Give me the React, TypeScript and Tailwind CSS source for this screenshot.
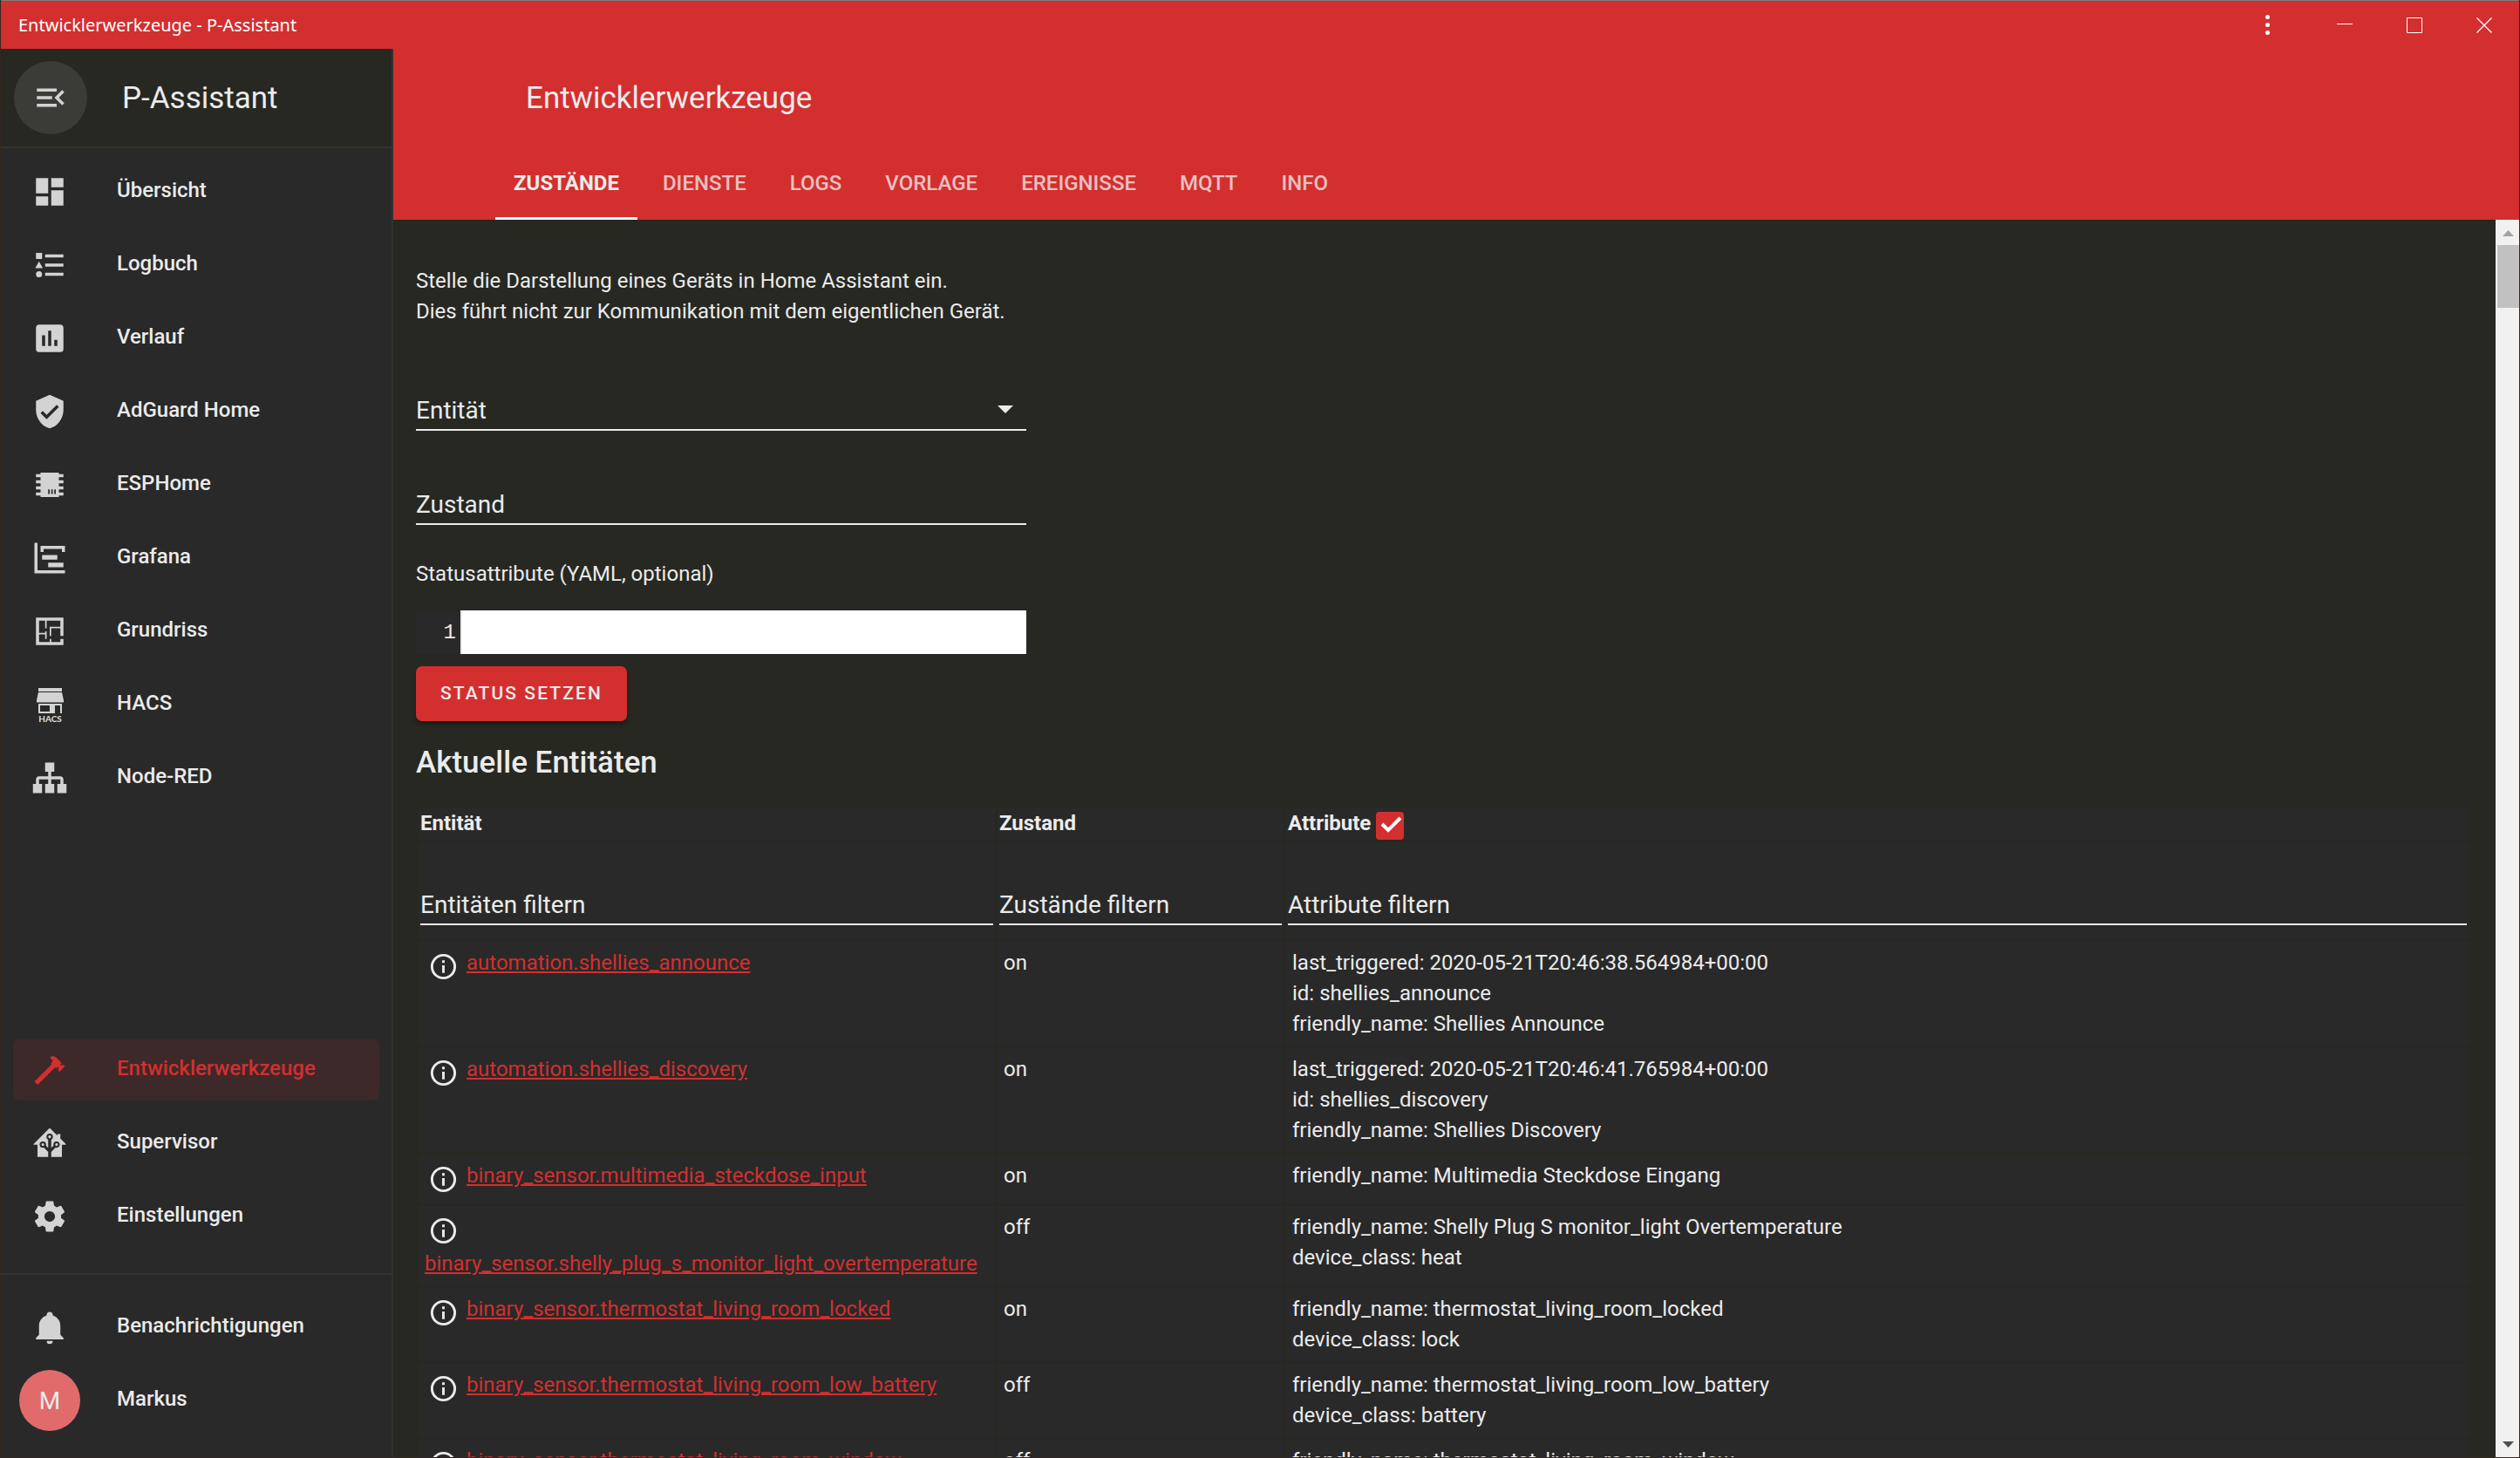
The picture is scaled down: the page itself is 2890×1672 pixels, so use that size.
import React from "react";

const icons = {
  menuOpen:
    "M21,15.61L19.59,17L14.58,12L19.59,7L21,8.39L17.44,12L21,15.61M3,6H16V8H3V6M3,13V11H13V13H3M3,18V16H16V18H3Z",
  dashboard: "M13,3V9H21V3M13,21H21V11H13M3,21H11V15H3M3,13H11V3H3V13Z",
  logbook:
    "M5,9.5L7.5,14H2.5L5,9.5M3,4H7V8H3V4M5,20A2,2 0 0,0 7,18A2,2 0 0,0 5,16A2,2 0 0,0 3,18A2,2 0 0,0 5,20M9,5V7H21V5H9M9,19H21V17H9V19M9,13H21V11H9V13Z",
  history:
    "M17,17H15V13H17M13,17H11V7H13M9,17H7V10H9M19,3H5C3.89,3 3,3.89 3,5V19A2,2 0 0,0 5,21H19A2,2 0 0,0 21,19V5C21,3.89 20.1,3 19,3Z",
  shield:
    "M10,17L6,13L7.41,11.59L10,14.17L16.59,7.58L18,9M12,1L3,5V11C3,16.55 6.84,21.74 12,23C17.16,21.74 21,16.55 21,11V5L12,1Z",
  chip: "M6,4H18V5H21V7H18V9H21V11H18V13H21V15H18V17H21V19H18V20H6V19H3V17H6V15H3V13H6V11H3V9H6V7H3V5H6V4M11,15V18H12V15H11M13,15V18H14V15H13M15,15V18H16V15H15Z",
  timeline:
    "M2,2H4V20H22V22H2V2M7,10H17V13H7V10M11,15H21V18H11V15M6,4H22V8H20V6H8V8H6V4Z",
  floorPlan:
    "M10,5V10H9V5H5V13H9V12H10V17H9V14H5V19H12V17H13V19H19V17H21V21H3V3H21V15H19V10H13V15H12V9H19V5H10Z",
  sitemap:
    "M9,2V8H11V11H5C3.89,11 3,11.89 3,13V16H1V22H7V16H5V13H11V16H9V22H15V16H13V13H19V16H17V22H23V16H21V13C21,11.89 20.11,11 19,11H13V8H15V2H9Z",
  hammer:
    "M2,19.63L13.43,8.2L12.72,7.5L14.14,6.07L12,3.89C13.2,2.7 15.09,2.7 16.27,3.89L19.87,7.5L18.45,8.91H21.29L22,9.62L18.45,13.21L17.74,12.5V9.62L16.27,11.04L15.56,10.33L4.13,21.76L2,19.63Z",
  homeAssistant:
    "M21.8,13H20V21H13V17.67L15.79,14.88L16.5,15C17.66,15 18.6,14.06 18.6,12.9C18.6,11.74 17.66,10.8 16.5,10.8A2.1,2.1 0 0,0 14.4,12.9L14.5,13.61L13,15.13V9.65C13.66,9.29 14.1,8.6 14.1,7.8A2.1,2.1 0 0,0 12,5.7A2.1,2.1 0 0,0 9.9,7.8C9.9,8.6 10.34,9.29 11,9.65V15.13L9.5,13.61L9.6,12.9A2.1,2.1 0 0,0 7.5,10.8A2.1,2.1 0 0,0 5.4,12.9A2.1,2.1 0 0,0 7.5,15L8.21,14.88L11,17.67V21H4V13H2.25C1.83,13 1.42,13 1.42,12.79C1.43,12.57 1.85,12.15 2.28,11.72L11,3C11.33,2.67 11.67,2.33 12,2.33C12.33,2.33 12.67,2.67 13,3L17,7V6H19V9L21.78,11.78C22.18,12.18 22.59,12.59 22.6,12.8C22.6,13 22.2,13 21.8,13M7.5,12A0.9,0.9 0 0,1 8.4,12.9A0.9,0.9 0 0,1 7.5,13.8A0.9,0.9 0 0,1 6.6,12.9A0.9,0.9 0 0,1 7.5,12M16.5,12C17,12 17.4,12.4 17.4,12.9C17.4,13.4 17,13.8 16.5,13.8A0.9,0.9 0 0,1 15.6,12.9A0.9,0.9 0 0,1 16.5,12M12,6.9C12.5,6.9 12.9,7.3 12.9,7.8C12.9,8.3 12.5,8.7 12,8.7C11.5,8.7 11.1,8.3 11.1,7.8C11.1,7.3 11.5,6.9 12,6.9Z",
  settings:
    "M12,15.5A3.5,3.5 0 0,1 8.5,12A3.5,3.5 0 0,1 12,8.5A3.5,3.5 0 0,1 15.5,12A3.5,3.5 0 0,1 12,15.5M19.43,12.97C19.47,12.65 19.5,12.33 19.5,12C19.5,11.67 19.47,11.34 19.43,11L21.54,9.37C21.73,9.22 21.78,8.95 21.66,8.73L19.66,5.27C19.54,5.05 19.27,4.96 19.05,5.05L16.56,6.05C16.04,5.66 15.5,5.32 14.87,5.07L14.5,2.42C14.46,2.18 14.25,2 14,2H10C9.75,2 9.54,2.18 9.5,2.42L9.13,5.07C8.5,5.32 7.96,5.66 7.44,6.05L4.95,5.05C4.73,4.96 4.46,5.05 4.34,5.27L2.34,8.73C2.21,8.95 2.27,9.22 2.46,9.37L4.57,11C4.53,11.34 4.5,11.67 4.5,12C4.5,12.33 4.53,12.65 4.57,12.97L2.46,14.63C2.27,14.78 2.21,15.05 2.34,15.27L4.34,18.73C4.46,18.95 4.73,19.03 4.95,18.95L7.44,17.94C7.96,18.34 8.5,18.68 9.13,18.93L9.5,21.58C9.54,21.82 9.75,22 10,22H14C14.25,22 14.46,21.82 14.5,21.58L14.87,18.93C15.5,18.67 16.04,18.34 16.56,17.94L19.05,18.95C19.27,19.03 19.54,18.95 19.66,18.73L21.66,15.27C21.78,15.05 21.73,14.78 21.54,14.63L19.43,12.97Z",
  bell: "M21,19V20H3V19L5,17V11C5,7.9 7.03,5.17 10,4.29C10,4.19 10,4.1 10,4A2,2 0 0,1 12,2A2,2 0 0,1 14,4C14,4.1 14,4.19 14,4.29C16.97,5.17 19,7.9 19,11V17L21,19M14,21A2,2 0 0,1 12,23A2,2 0 0,1 10,21",
  info: "M11,9H13V7H11M12,20C7.59,20 4,16.41 4,12C4,7.59 7.59,4 12,4C16.41,4 20,7.59 20,12C20,16.41 16.41,20 12,20M12,2A10,10 0 0,0 2,12A10,10 0 0,0 12,22A10,10 0 0,0 22,12A10,10 0 0,0 12,2M11,17H13V11H11V17Z",
};

function Icon({ path, className }: { path: string; className: string }) {
  return (
    <svg viewBox="0 0 24 24" fill="currentColor" aria-hidden="true" className={className}>
      <path d={path} />
    </svg>
  );
}

function HacsIcon() {
  return (
    <svg viewBox="0 0 42 42" fill="currentColor" aria-hidden="true" className="size-[42px]">
      <path d="M8 2H35V6H8ZM8 7H35L37 16V18.500H6V16Z" />
      <path fillRule="evenodd" d="M8 20H35V31H33V22H27V31H8ZM10 22V29H21V22Z" />
      <text x="21.500" y="41" textAnchor="middle" fontSize="10" fontWeight="900" fontFamily="Lato, sans-serif">
        HACS
      </text>
    </svg>
  );
}

const iconClass = "size-[42px]";

const mainItems: { label: string; icon: React.ReactNode }[] = [
  { label: "Übersicht", icon: <Icon path={icons.dashboard} className={iconClass} /> },
  { label: "Logbuch", icon: <Icon path={icons.logbook} className={iconClass} /> },
  { label: "Verlauf", icon: <Icon path={icons.history} className={iconClass} /> },
  { label: "AdGuard Home", icon: <Icon path={icons.shield} className={iconClass} /> },
  { label: "ESPHome", icon: <Icon path={icons.chip} className={iconClass} /> },
  { label: "Grafana", icon: <Icon path={icons.timeline} className={iconClass} /> },
  { label: "Grundriss", icon: <Icon path={icons.floorPlan} className={iconClass} /> },
  { label: "HACS", icon: <HacsIcon /> },
  { label: "Node-RED", icon: <Icon path={icons.sitemap} className={iconClass} /> },
];

const toolItems: { label: string; icon: React.ReactNode; active?: boolean }[] = [
  { label: "Entwicklerwerkzeuge", icon: <Icon path={icons.hammer} className={iconClass} />, active: true },
  { label: "Supervisor", icon: <Icon path={icons.homeAssistant} className={iconClass} /> },
  { label: "Einstellungen", icon: <Icon path={icons.settings} className={iconClass} /> },
];

const tabs = ["Zustände", "Dienste", "Logs", "Vorlage", "Ereignisse", "MQTT", "Info"];

const entities = [
  {
    id: "automation.shellies_announce",
    state: "on",
    attributes: [
      "last_triggered: 2020-05-21T20:46:38.564984+00:00",
      "id: shellies_announce",
      "friendly_name: Shellies Announce",
    ],
  },
  {
    id: "automation.shellies_discovery",
    state: "on",
    attributes: [
      "last_triggered: 2020-05-21T20:46:41.765984+00:00",
      "id: shellies_discovery",
      "friendly_name: Shellies Discovery",
    ],
  },
  {
    id: "binary_sensor.multimedia_steckdose_input",
    state: "on",
    attributes: ["friendly_name: Multimedia Steckdose Eingang"],
  },
  {
    id: "binary_sensor.shelly_plug_s_monitor_light_overtemperature",
    state: "off",
    attributes: ["friendly_name: Shelly Plug S monitor_light Overtemperature", "device_class: heat"],
  },
  {
    id: "binary_sensor.thermostat_living_room_locked",
    state: "on",
    attributes: ["friendly_name: thermostat_living_room_locked", "device_class: lock"],
  },
  {
    id: "binary_sensor.thermostat_living_room_low_battery",
    state: "off",
    attributes: ["friendly_name: thermostat_living_room_low_battery", "device_class: battery"],
  },
  {
    id: "binary_sensor.thermostat_living_room_window",
    state: "off",
    attributes: ["friendly_name: thermostat_living_room_window", "device_class: window"],
  },
];

function NavItem({ label, icon, active }: { label: string; icon: React.ReactNode; active?: boolean }) {
  return (
    <li>
      <a
        href="#"
        aria-current={active ? "page" : undefined}
        className={
          active
            ? "flex h-[70px] items-center rounded-[7px] bg-[#3d292a] pl-[21px] text-[#d32f2f]"
            : "flex h-[70px] items-center rounded-[7px] pl-[21px] text-[#ebebeb]"
        }
      >
        <span className={active ? "w-[98px]" : "w-[98px] text-[#d3d3d3]"}>{icon}</span>
        <span className="pb-1 font-medium">{label}</span>
      </a>
    </li>
  );
}

function TitleBar() {
  return (
    <header className="flex h-[56px] shrink-0 items-center border-t border-[#7f7f7f] bg-[#d32f2f] text-white">
      <span className="flex-1 pl-5 font-['Noto_Sans',sans-serif] text-[20px]">Entwicklerwerkzeuge - P-Assistant</span>
      <button aria-label="Menü" className="mr-6 flex h-full w-[50px] items-center justify-center">
        <svg viewBox="0 0 5 23" fill="currentColor" className="h-[23px] w-[5px]">
          <circle cx="2.500" cy="2.500" r="2.500" />
          <circle cx="2.500" cy="11.500" r="2.500" />
          <circle cx="2.500" cy="20.500" r="2.500" />
        </svg>
      </button>
      <button aria-label="Minimieren" className="flex h-full w-20 items-center justify-center">
        <svg viewBox="0 0 18 18" fill="none" stroke="currentColor" className="size-[18px]">
          <path d="M0 7.500H18" />
        </svg>
      </button>
      <button aria-label="Maximieren" className="flex h-full w-20 items-center justify-center">
        <svg viewBox="0 0 18 18" fill="none" stroke="currentColor" className="size-[18px]">
          <path d="M0.500 0.500H17.500V17.500H0.500Z" />
        </svg>
      </button>
      <button aria-label="Schließen" className="flex h-full w-20 items-center justify-center">
        <svg viewBox="0 0 18 18" fill="none" stroke="currentColor" strokeWidth="1.3" className="size-[18px]">
          <path d="M0.500 0.500L17.500 17.500M17.500 0.500L0.500 17.500" />
        </svg>
      </button>
    </header>
  );
}

function Sidebar() {
  return (
    <nav className="flex w-[450px] shrink-0 flex-col border-r-2 border-[#323232] bg-[#292929]">
      <div className="flex h-[114px] shrink-0 items-center border-b-2 border-[#323232] bg-[#272822] pl-[15px]">
        <button
          aria-label="Seitenleiste umschalten"
          className="flex size-[84px] items-center justify-center rounded-full bg-[#3b3c37] text-[#d3d3d3]"
        >
          <Icon path={icons.menuOpen} className={iconClass} />
        </button>
        <span className="pl-10 text-[35px]">P-Assistant</span>
      </div>
      <ul className="flex flex-1 flex-col gap-[14px] px-[14px] pt-[15px]">
        {mainItems.map((item) => (
          <NavItem key={item.label} {...item} />
        ))}
      </ul>
      <ul className="flex flex-col gap-[14px] px-[14px] pb-[30px]">
        {toolItems.map((item) => (
          <NavItem key={item.label} {...item} />
        ))}
      </ul>
      <ul className="flex flex-col gap-[14px] border-t-2 border-[#323232] px-[14px] pt-[25px] pb-[30px]">
        <NavItem label="Benachrichtigungen" icon={<Icon path={icons.bell} className={iconClass} />} />
        <li>
          <a href="#" className="flex h-[70px] items-center pl-[7px]">
            <span className="mr-[42px] flex size-[70px] items-center justify-center rounded-full bg-[#e16b6b] text-[28px]">
              M
            </span>
            <span className="pb-1 font-medium">Markus</span>
          </a>
        </li>
      </ul>
    </nav>
  );
}

function PageHeader() {
  return (
    <div className="flex h-[196px] shrink-0 flex-col bg-[#d32f2f]">
      <h1 className="flex h-[112px] items-center pl-[152px] text-[35px]">Entwicklerwerkzeuge</h1>
      <div role="tablist" className="flex flex-1 gap-2 pl-[117px]">
        {tabs.map((tab, i) => (
          <button
            key={tab}
            role="tab"
            aria-selected={i === 0}
            className={
              i === 0
                ? "border-b-[3px] border-white px-[21px] pt-1 font-bold uppercase"
                : "border-b-[3px] border-transparent px-[21px] pt-1 font-medium text-[#e8c0c0] uppercase"
            }
          >
            {tab}
          </button>
        ))}
      </div>
    </div>
  );
}

const fieldClass =
  "block h-[46px] w-full appearance-none border-b-2 border-[#ebebeb] bg-transparent text-[28px] text-[#ebebeb] outline-none placeholder:text-[#ebebeb] placeholder:opacity-100";

function StateForm() {
  return (
    <form className="flex w-[700px] flex-col items-start" onSubmit={(e) => e.preventDefault()}>
      <div className="relative mt-[73px] w-full">
        <select aria-label="Entität" className={fieldClass}>
          <option>Entität</option>
        </select>
        <svg
          viewBox="0 0 18 9"
          fill="currentColor"
          aria-hidden="true"
          className="pointer-events-none absolute top-[17px] right-[15px] h-[9px] w-[18px]"
        >
          <path d="M0 0H18L9 9Z" />
        </svg>
      </div>
      <input aria-label="Zustand" placeholder="Zustand" className={fieldClass + " mt-[62px]"} />
      <label htmlFor="attributes" className="mt-[39px]">
        Statusattribute (YAML, optional)
      </label>
      <div className="mt-6 flex h-[50px] w-full bg-[#292929]">
        <span className="flex w-[51px] items-center justify-end pr-[5px] font-['Liberation_Mono',monospace]">1</span>
        <textarea
          id="attributes"
          rows={1}
          className="block h-full flex-1 resize-none border-l-2 border-[#ebebeb] bg-white p-2 text-black outline-none"
        />
      </div>
      <button
        type="submit"
        className="mt-[14px] h-[63px] rounded-[7px] bg-[#d32f2f] px-7 text-[21px] font-medium tracking-widest uppercase shadow-[0_4px_5px_rgba(0,0,0,0.3)]"
      >
        Status setzen
      </button>
    </form>
  );
}

function EntityTable() {
  return (
    <table className="w-full table-fixed border-separate border-spacing-[3px] text-left">
      <colgroup>
        <col className="w-[661px]" />
        <col className="w-[328px]" />
        <col />
      </colgroup>
      <thead>
        <tr className="h-[37px] bg-[#292929]">
          <th className="px-0.5 font-bold">Entität</th>
          <th className="px-0.5 font-bold">Zustand</th>
          <th className="px-0.5 font-bold">
            <div className="flex h-[37px] items-center gap-[6px]">
              <label htmlFor="show-attributes">Attribute</label>
              <span className="relative mt-1 size-8">
                <input
                  id="show-attributes"
                  type="checkbox"
                  defaultChecked
                  className="block size-8 appearance-none rounded-[4px] bg-[#d32f2f]"
                />
                <svg
                  viewBox="0 0 32 32"
                  fill="none"
                  stroke="white"
                  strokeWidth="4"
                  aria-hidden="true"
                  className="pointer-events-none absolute inset-0 size-8"
                >
                  <path d="M7 14L14 21L28 7" />
                </svg>
              </span>
            </div>
          </th>
        </tr>
        <tr className="bg-[#292929]">
          {["Entitäten filtern", "Zustände filtern", "Attribute filtern"].map((label) => (
            <th key={label} className="px-0.5 pt-[49px] pb-4 font-normal">
              <input aria-label={label} placeholder={label} className={fieldClass} />
            </th>
          ))}
        </tr>
      </thead>
      <tbody>
        {entities.map((entity) => (
          <tr key={entity.id} className="bg-[#292929] align-top">
            <td className="p-[7px]">
              <div className="flex flex-wrap items-start">
                <button aria-label="Mehr Informationen" className="flex h-[42px] w-12 items-center pl-1">
                  <Icon path={icons.info} className="size-[35px]" />
                </button>
                <a href="#" className="text-[#d32f2f] underline">
                  {entity.id}
                </a>
              </div>
            </td>
            <td className="p-[7px]">{entity.state}</td>
            <td className="p-[7px]">
              {entity.attributes.map((line) => (
                <div key={line}>{line}</div>
              ))}
            </td>
          </tr>
        ))}
      </tbody>
    </table>
  );
}

function Scrollbar() {
  return (
    <div aria-hidden="true" className="flex w-[27px] shrink-0 flex-col items-center bg-[#f1f1f1]">
      <svg viewBox="0 0 27 29" className="h-[29px] w-[27px]">
        <path d="M8 19L14.500 12L21 19Z" fill="#a3a3a3" />
      </svg>
      <div className="ml-0.5 h-[72px] self-stretch bg-[#c1c1c1]" />
      <div className="flex-1" />
      <svg viewBox="0 0 27 29" className="h-[29px] w-[27px]">
        <path d="M8 11L14.500 18L21 11Z" fill="#505050" />
      </svg>
    </div>
  );
}

export default function App() {
  return (
    <div className="flex h-screen flex-col overflow-hidden border-x border-b border-[#33271f] bg-[#272822] font-['Roboto',sans-serif] text-[24px] leading-[35px] text-[#ebebeb]">
      <TitleBar />
      <div className="flex min-h-0 flex-1">
        <Sidebar />
        <div className="flex min-w-0 flex-1 flex-col">
          <PageHeader />
          <div className="flex min-h-0 flex-1">
            <main className="min-w-0 flex-1 overflow-hidden pt-[53px] pr-7 pl-[26px]">
              <p>
                Stelle die Darstellung eines Geräts in Home Assistant ein.
                <br />
                Dies führt nicht zur Kommunikation mit dem eigentlichen Gerät.
              </p>
              <StateForm />
              <h2 className="mt-[27px] mb-[27px] text-[35px] leading-[42px] font-medium">Aktuelle Entitäten</h2>
              <EntityTable />
            </main>
            <Scrollbar />
          </div>
        </div>
      </div>
    </div>
  );
}
